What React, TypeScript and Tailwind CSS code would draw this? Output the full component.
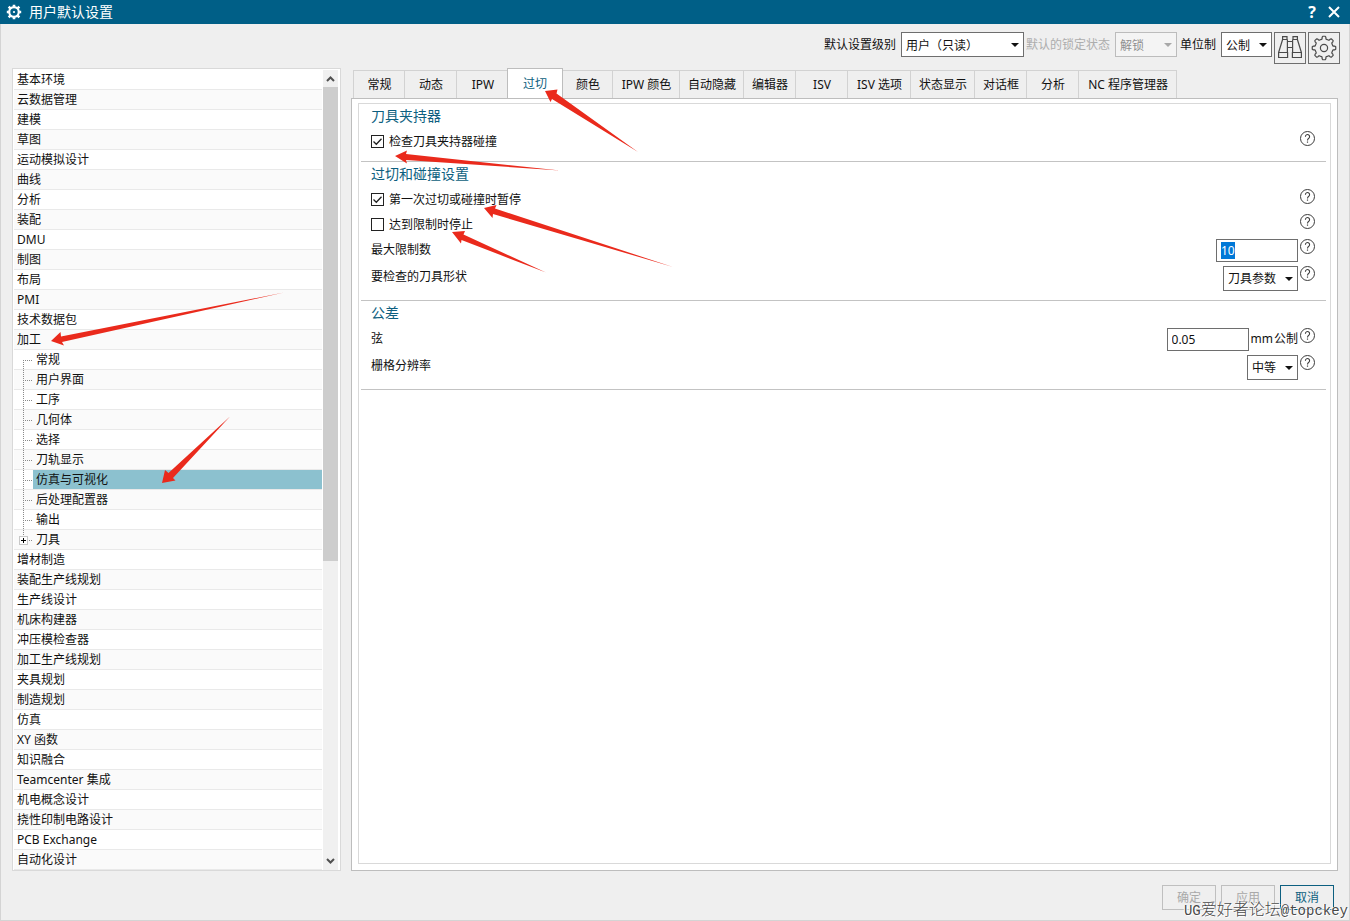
import { useEffect, useRef, useState } from 'react';
import type { ReactNode } from 'react';

const topItems = [
  '基本环境', '云数据管理', '建模', '草图', '运动模拟设计', '曲线', '分析', '装配', 'DMU', '制图', '布局', 'PMI', '技术数据包', '加工',
];
const childItems = ['常规', '用户界面', '工序', '几何体', '选择', '刀轨显示', '仿真与可视化', '后处理配置器', '输出', '刀具'];
const bottomItems = [
  '增材制造', '装配生产线规划', '生产线设计', '机床构建器', '冲压模检查器', '加工生产线规划', '夹具规划', '制造规划', '仿真',
  'XY 函数', '知识融合', 'Teamcenter 集成', '机电概念设计', '挠性印制电路设计', 'PCB Exchange', '自动化设计',
];
const tabs: [string, string][] = [
  ['常规', 'min-w-[52px]'],
  ['动态', 'min-w-[52px]'],
  ['IPW', 'min-w-[52px]'],
  ['过切', 'min-w-[56px]'],
  ['颜色', 'min-w-[50px]'],
  ['IPW 颜色', 'min-w-[67px]'],
  ['自动隐藏', 'min-w-[64px]'],
  ['编辑器', 'min-w-[52px]'],
  ['ISV', 'min-w-[52px]'],
  ['ISV 选项', 'min-w-[63px]'],
  ['状态显示', 'min-w-[64px]'],
  ['对话框', 'min-w-[52px]'],
  ['分析', 'min-w-[52px]'],
  ['NC 程序管理器', 'min-w-[98px]'],
];

function gearPath(c: number, outer: number, inner: number) {
  const parts: string[] = [];
  const offsets: [number, number][] = [
    [-17, inner], [-12, inner + 0.3], [-10, outer - 1], [-6, outer], [6, outer], [10, outer - 1], [12, inner + 0.3], [17, inner],
  ];
  for (let i = 0; i < 8; i++) {
    for (const [deg, r] of offsets) {
      const a = ((i * 45 + deg) * Math.PI) / 180;
      parts.push(`${(c + r * Math.sin(a)).toFixed(2)} ${(c - r * Math.cos(a)).toFixed(2)}`);
    }
  }
  return `M${parts.join('L')}Z`;
}

function TitleGear() {
  return (
    <svg className="size-4" viewBox="0 0 16 16" fill="none" aria-hidden="true">
      <circle cx="8" cy="8" r="4.8" stroke="#fff" strokeWidth="2.2" />
      <path d="M8 .8v2M8 13.2v2M.8 8h2M13.2 8h2M2.700 2.700l1.600 1.600M11.700 11.700l1.600 1.600M2.700 13.300l1.600-1.600M11.700 4.300l1.600-1.600" stroke="#fff" strokeWidth="2.600" />
      <circle cx="8" cy="8" r="1.100" fill="#fff" />
    </svg>
  );
}

function Binoculars() {
  return (
    <svg className="size-6" viewBox="0 0 24 24" fill="none" stroke="#4a4a4a" strokeWidth="1.2" aria-hidden="true">
      <path d="M.6 16.5h9v5h-9zM4.6 3.5h4.8M4.6 3.5V.6h4.4v2.9M4.6 3.5L.6 16.5M9.4 3.5v13" />
      <path d="M14.4 16.5h9v5h-9zM14.6 3.5h4.8M15 3.5V.6h4.4v2.9M19.4 3.5l4 13M14.6 3.5v13M9.4 5.5h5.2M9.4 11.5h5.2" />
    </svg>
  );
}

function Gear() {
  return (
    <svg className="size-[26px]" viewBox="0 0 26 26" fill="none" stroke="#4a4a4a" strokeWidth="1.2" strokeLinejoin="round" aria-hidden="true">
      <path d={gearPath(13, 11.8, 9)} />
      <circle cx="13" cy="13" r="3.6" />
    </svg>
  );
}

function Help() {
  return (
    <button type="button" aria-label="帮助" className="ml-[2px] size-4 shrink-0">
      <svg className="size-4" viewBox="0 0 16 16" fill="none" stroke="#3c3c3c" aria-hidden="true">
        <circle cx="7.500" cy="7.500" r="7" />
        <path d="M5.400 5.700a2.100 2.100 0 1 1 3.400 1.600C8 7.900 7.500 8.300 7.500 9.400" strokeWidth="1.100" />
        <path d="M7.500 10.500v1.200" strokeWidth="1.200" />
      </svg>
    </button>
  );
}

function Dropdown({ id, options, className, disabled = false }: { id: string; options: string[]; className: string; disabled?: boolean }) {
  return (
    <div className="relative shrink-0">
      <select
        id={id}
        disabled={disabled}
        className={`block h-[25px] appearance-none border border-[#6e6e6e] bg-white pl-1 pr-3 text-[#111] outline-none disabled:border-[#bcbcbc] disabled:bg-[#f4f4f4] disabled:text-[#8f8f8f] disabled:opacity-100 ${className}`}
      >
        {options.map((o) => (
          <option key={o}>{o}</option>
        ))}
      </select>
      <svg className="pointer-events-none absolute right-[5px] top-[11px] h-1 w-[8px]" viewBox="0 0 8 4" aria-hidden="true">
        <path d="M0 0h8L4 4z" fill={disabled ? '#a8a8a8' : '#111'} />
      </svg>
    </div>
  );
}

function Row({ label, id, children }: { label: string; id: string; children: ReactNode }) {
  return (
    <div className="flex h-[27px] items-start pt-[2px]">
      <label htmlFor={id} className="mr-auto leading-[21px]">{label}</label>
      {children}
      <Help />
    </div>
  );
}

function CheckRow({ label, initial }: { label: string; initial: boolean }) {
  const [on, setOn] = useState(initial);
  return (
    <div className="flex h-[25px] items-start pt-[2px]">
      <label className="mr-auto flex items-center leading-[21px]">
        <span className="mr-[5px] grid size-[13px] place-items-center">
          <input type="checkbox" checked={on} onChange={() => setOn(!on)} className="col-start-1 row-start-1 size-[13px] appearance-none border border-[#222] bg-white" />
          {on && (
            <svg className="pointer-events-none col-start-1 row-start-1 size-[13px]" viewBox="0 0 13 13" fill="none" stroke="#222" strokeWidth="1.300" aria-hidden="true">
              <path d="M2.500 6.500l2.800 2.800 5.200-5.600" />
            </svg>
          )}
        </span>
        {label}
      </label>
      <Help />
    </div>
  );
}

function Group({ title, compact = false, children }: { title: string; compact?: boolean; children: ReactNode }) {
  return (
    <section className={`border-b border-[#c3c3c3] pl-[10px] pr-[10px] ${compact ? 'pb-[7px]' : 'pb-[9px]'}`}>
      <h2 className="mb-px text-[14px] leading-6 text-[#0d5f80]">{title}</h2>
      {children}
    </section>
  );
}

function TreeRow({ label, index }: { label: string; index: number }) {
  return (
    <li className={`flex h-5 border-b border-[#e9e9e9] ${index % 2 ? 'bg-[#fafafa]' : 'bg-white'}`}>
      <button type="button" className="grow pl-[3px] text-left leading-[19px]">{label}</button>
    </li>
  );
}

function ChildRow({ label, index, first, last }: { label: string; index: number; first: boolean; last: boolean }) {
  const selected = label === '仿真与可视化';
  return (
    <li className={`flex h-5 border-b border-[#e9e9e9] ${index % 2 ? 'bg-[#fafafa]' : 'bg-white'}`}>
      <svg className="ml-[5px] mr-px h-[19px] w-[13px]" viewBox="0 0 13 19" fill="none" stroke="#8a8a8a" aria-hidden="true">
        {!first && <path d="M4.500 0v10" strokeDasharray="1 1" />}
        {!last && <path d="M4.500 10v9" strokeDasharray="1 1" />}
        <path d="M4 10.500h9" strokeDasharray="1 1" />
        {last && (
          <>
            <rect x=".5" y="6.500" width="8" height="8" fill="#fff" stroke="#c8c8c8" />
            <path d="M2 10.500h5M4.500 8v5" stroke="#000" />
          </>
        )}
      </svg>
      <button type="button" className={`grow pl-[3px] text-left leading-[19px] ${selected ? 'bg-[#8cc1cf]' : ''}`}>{label}</button>
    </li>
  );
}

const arrows = [
  'M545 91L557.500 89.500 556.500 93.500 638 152 552 99 550.500 102Z',
  'M395 156L407 150.500 406 154 560 170.500 406 160 407 163.500Z',
  'M484 208L496.500 205 495 208.500 673 267 493 214 492.500 218Z',
  'M452 232L465 231 463.500 234.500 546 272.500 461.500 240 461 243.500Z',
  'M51 341L60.500 332 61 336.500 284 292.500 62 342 64 345.500Z',
  'M162 483L165 470 168.500 473 230 416.500 173 478 175.500 480.500Z',
];

export default function App() {
  const limit = useRef<HTMLInputElement>(null);
  useEffect(() => {
    limit.current?.focus();
    limit.current?.select();
  }, []);

  return (
    <div className="relative flex min-h-screen flex-col bg-[#efefef] font-['Noto_Sans','Noto_Sans_CJK_SC',sans-serif] text-[12px] text-[#111]">
      <header className="flex h-6 items-center bg-[#005f87] pl-[6px] pr-[10px] text-white">
        <TitleGear />
        <h1 className="ml-[7px] mr-auto text-[14px] leading-6">用户默认设置</h1>
        <button type="button" className="mr-3 font-['Open_Sans',sans-serif] text-[16px] font-bold leading-6">?</button>
        <button type="button" aria-label="关闭">
          <svg className="size-3" viewBox="0 0 12 12" stroke="#fff" strokeWidth="2" aria-hidden="true">
            <path d="M1 1l10 10M11 1L1 11" />
          </svg>
        </button>
      </header>

      <div className="flex grow flex-col border-x border-b border-[#d4d4d4]">
        <div className="flex h-11 items-start justify-end pr-[9px] pt-2 leading-[25px]">
          <label htmlFor="level" className="mr-[5px]">默认设置级别</label>
          <Dropdown id="level" options={['用户（只读）']} className="w-[123px]" />
          <label htmlFor="lock" className="ml-[2px] mr-[5px] text-[#adadad]">默认的锁定状态</label>
          <Dropdown id="lock" options={['解锁']} disabled className="w-[62px]" />
          <label htmlFor="unit" className="ml-[3px] mr-[5px]">单位制</label>
          <Dropdown id="unit" options={['公制']} className="w-[51px]" />
          <button type="button" aria-label="查找" className="ml-[2px] grid size-8 place-items-center border border-[#6e6e6e]">
            <Binoculars />
          </button>
          <button type="button" aria-label="设置" className="ml-[2px] grid size-8 place-items-center border border-[#6e6e6e]">
            <Gear />
          </button>
        </div>

        <div className="flex grow gap-[10px] px-[11px]">
          <nav className="flex w-[329px] shrink-0 border border-[#d9d9d9] bg-white pl-px pr-px pt-px">
            <ul className="grow">
              {topItems.map((t, i) => (
                <TreeRow key={t} label={t} index={i} />
              ))}
              {childItems.map((t, i) => (
                <ChildRow key={t} label={t} index={i} first={i === 0} last={i === childItems.length - 1} />
              ))}
              {bottomItems.map((t, i) => (
                <TreeRow key={t} label={t} index={i} />
              ))}
            </ul>
            <div className="ml-px mr-px flex w-[15px] flex-col bg-[#f0f0f0]">
              <svg className="h-[17px] w-[15px] shrink-0" viewBox="0 0 15 17" fill="none" stroke="#505050" strokeWidth="2" aria-hidden="true">
                <path d="M4 11l3.500-3.500L11 11" />
              </svg>
              <div className="h-[474px] bg-[#cdcdcd]" />
              <svg className="mt-auto h-[17px] w-[15px] shrink-0" viewBox="0 0 15 17" fill="none" stroke="#505050" strokeWidth="2" aria-hidden="true">
                <path d="M4 6l3.500 3.500L11 6" />
              </svg>
            </div>
          </nav>

          <main className="flex grow flex-col">
            <div role="tablist" className="-mb-px flex h-[31px] items-end pl-[2px]">
              {tabs.map(([t, width]) =>
                t === '过切' ? (
                  <button key={t} type="button" role="tab" aria-selected="true" className={`-ml-[2px] h-[31px] border border-b-0 border-[#bdbdbd] bg-white text-[#0d5f80] ${width}`}>
                    {t}
                  </button>
                ) : (
                  <button key={t} type="button" role="tab" aria-selected="false" className={`h-[29px] border-b border-r border-t border-b-[#bdbdbd] border-r-[#d2d2d2] border-t-[#d2d2d2] pl-2 pr-[7px] first:border-l first:border-l-[#d2d2d2] ${width}`}>
                    {t}
                  </button>
                ),
              )}
            </div>
            <div className="grow border border-[#bdbdbd] bg-white px-[6px] pb-[6px] pt-1">
              <div className="h-full border border-[#d9d9d9] pl-[2px] pr-1">
                <Group title="刀具夹持器" compact>
                  <CheckRow label="检查刀具夹持器碰撞" initial />
                </Group>
                <Group title="过切和碰撞设置">
                  <CheckRow label="第一次过切或碰撞时暂停" initial />
                  <CheckRow label="达到限制时停止" initial={false} />
                  <Row label="最大限制数" id="limit">
                    <input id="limit" ref={limit} defaultValue="10" className="h-[23px] w-[82px] border border-[#6e6e6e] bg-white px-1 outline-none selection:bg-[#0078d7] selection:text-white" />
                  </Row>
                  <Row label="要检查的刀具形状" id="shape">
                    <Dropdown id="shape" options={['刀具参数']} className="w-[75px]" />
                  </Row>
                </Group>
                <Group title="公差">
                  <Row label="弦" id="chord">
                    <input id="chord" defaultValue="0.05" className="h-[23px] w-[82px] border border-[#6e6e6e] bg-white px-1 outline-none" />
                    <span className="ml-[2px] flex gap-px leading-[21px]">
                      <span>mm</span>
                      <span>公制</span>
                    </span>
                  </Row>
                  <Row label="栅格分辨率" id="grid">
                    <Dropdown id="grid" options={['中等']} className="w-[51px]" />
                  </Row>
                </Group>
              </div>
            </div>
          </main>
        </div>

        <footer className="flex justify-end gap-[5px] pb-[10px] pr-[15px] pt-[14px]">
          <button type="button" disabled className="h-[25px] w-[54px] border border-[#bfbfbf] text-[#a9a9a9]">确定</button>
          <button type="button" disabled className="h-[25px] w-[54px] border border-[#bfbfbf] text-[#a9a9a9]">应用</button>
          <button type="button" className="h-[25px] w-[54px] border border-[#0d5f80] text-[#0d5f80]">取消</button>
        </footer>
      </div>

      <svg className="pointer-events-none absolute left-0 top-0 h-[500px] w-[700px]" viewBox="0 0 700 500" fill="#ea2a1c" aria-hidden="true">
        {arrows.map((d) => (
          <path key={d} d={d} />
        ))}
      </svg>
      <div className="pointer-events-none absolute bottom-0 right-[2px] font-['Liberation_Mono','Noto_Sans_CJK_SC',monospace] text-[14px] leading-5 text-[#4a4a4a] [text-shadow:1px_1px_0_#fff,-1px_0_0_#fff]">
        UG<span className="text-[16px] font-light">爱好者论坛</span>@topckey
      </div>
    </div>
  );
}
